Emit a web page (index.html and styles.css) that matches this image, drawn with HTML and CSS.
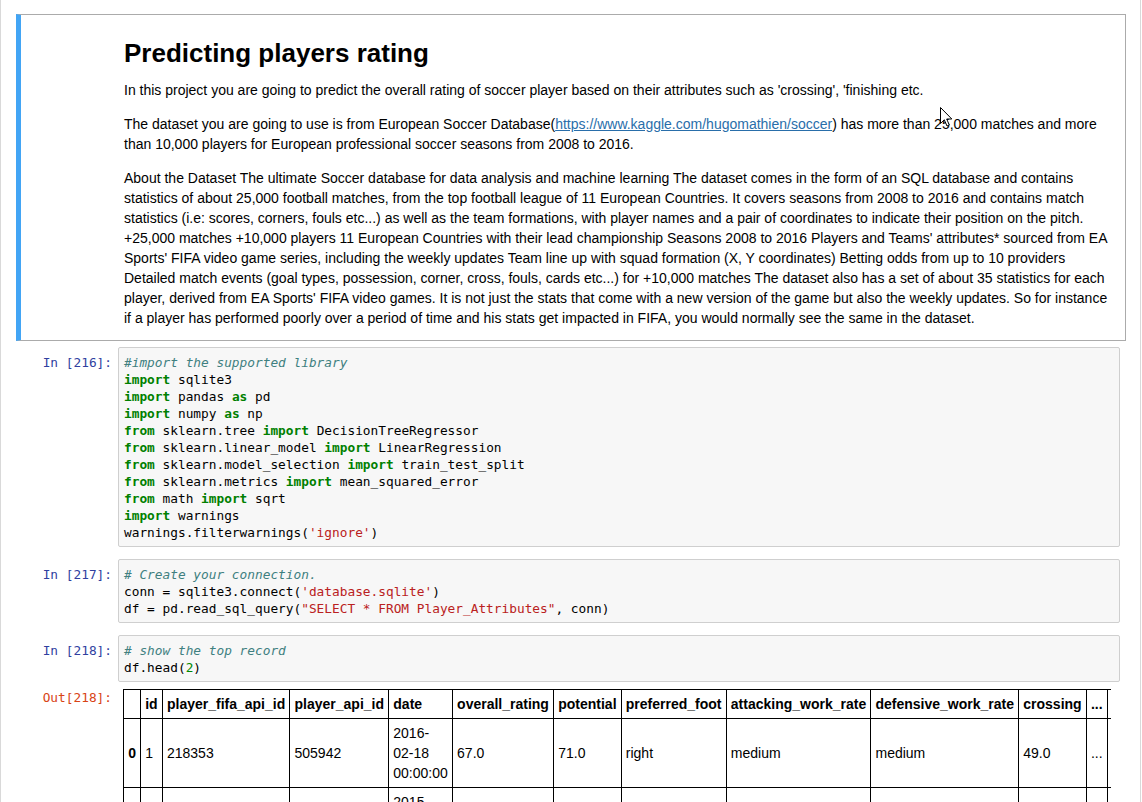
FILE: index.html
```html
<!DOCTYPE html>
<html>
<head>
<meta charset="utf-8">
<title>Predicting players rating</title>
<link rel="stylesheet" href="styles.css">
</head>
<body>
<div class="notebook">
  <div class="cell text-cell selected">
    <div class="prompt"></div>
    <div class="render">
      <h1>Predicting players rating</h1>
      <p>In this project you are going to predict the overall rating of soccer player based on their attributes such as 'crossing', 'finishing etc.</p>
      <p>The dataset you are going to use is from European Soccer Database(<a href="#">https://www.kaggle.com/hugomathien/soccer</a>) has more than 25,000 matches and more than 10,000 players for European professional soccer seasons from 2008 to 2016.</p>
      <p>About the Dataset The ultimate Soccer database for data analysis and machine learning The dataset comes in the form of an SQL database and contains statistics of about 25,000 football matches, from the top football league of 11 European Countries. It covers seasons from 2008 to 2016 and contains match statistics (i.e: scores, corners, fouls etc...) as well as the team formations, with player names and a pair of coordinates to indicate their position on the pitch. +25,000 matches +10,000 players 11 European Countries with their lead championship Seasons 2008 to 2016 Players and Teams' attributes* sourced from EA Sports' FIFA video game series, including the weekly updates Team line up with squad formation (X, Y coordinates) Betting odds from up to 10 providers Detailed match events (goal types, possession, corner, cross, fouls, cards etc...) for +10,000 matches The dataset also has a set of about 35 statistics for each player, derived from EA Sports' FIFA video games. It is not just the stats that come with a new version of the game but also the weekly updates. So for instance if a player has performed poorly over a period of time and his stats get impacted in FIFA, you would normally see the same in the dataset.</p>
    </div>
  </div>

  <div class="cell code-cell">
    <div class="input">
      <div class="prompt in">In&nbsp;[216]:</div>
      <div class="input-area"><span class="cm">#import the supported library</span>
<span class="kw">import</span> sqlite3
<span class="kw">import</span> pandas <span class="kw">as</span> pd
<span class="kw">import</span> numpy <span class="kw">as</span> np
<span class="kw">from</span> sklearn.tree <span class="kw">import</span> DecisionTreeRegressor
<span class="kw">from</span> sklearn.linear_model <span class="kw">import</span> LinearRegression
<span class="kw">from</span> sklearn.model_selection <span class="kw">import</span> train_test_split
<span class="kw">from</span> sklearn.metrics <span class="kw">import</span> mean_squared_error
<span class="kw">from</span> math <span class="kw">import</span> sqrt
<span class="kw">import</span> warnings
warnings.filterwarnings(<span class="str">'ignore'</span>)</div>
    </div>
  </div>

  <div class="cell code-cell">
    <div class="input">
      <div class="prompt in">In&nbsp;[217]:</div>
      <div class="input-area"><span class="cm"># Create your connection.</span>
conn = sqlite3.connect(<span class="str">'database.sqlite'</span>)
df = pd.read_sql_query(<span class="str">"SELECT * FROM Player_Attributes"</span>, conn)</div>
    </div>
  </div>

  <div class="cell code-cell">
    <div class="input">
      <div class="prompt in">In&nbsp;[218]:</div>
      <div class="input-area"><span class="cm"># show the top record</span>
df.head(<span class="num">2</span>)</div>
    </div>
    <div class="output">
      <div class="prompt out">Out[218]:</div>
      <div class="output-sub">
        <div class="df-wrap">
          <table class="dataframe">
            <thead>
              <tr>
                <th></th><th>id</th><th>player_fifa_api_id</th><th>player_api_id</th><th>date</th><th>overall_rating</th><th>potential</th><th>preferred_foot</th><th>attacking_work_rate</th><th>defensive_work_rate</th><th>crossing</th><th>...</th><th>vision</th><th>penalties</th><th>marking</th><th>standing_tackle</th><th>sliding_tackle</th><th>gk_diving</th><th>gk_handling</th><th>gk_kicking</th><th>gk_positioning</th><th>gk_reflexes</th>
              </tr>
            </thead>
            <tbody>
              <tr>
                <th>0</th><td>1</td><td>218353</td><td>505942</td><td>2016-<wbr>02-18 00:00:00</td><td>67.0</td><td>71.0</td><td>right</td><td>medium</td><td>medium</td><td>49.0</td><td>...</td><td>54.0</td><td>48.0</td><td>65.0</td><td>69.0</td><td>69.0</td><td>6.0</td><td>11.0</td><td>10.0</td><td>8.0</td><td>8.0</td>
              </tr>
              <tr>
                <th>1</th><td>2</td><td>218353</td><td>505942</td><td>2015-<wbr>11-19 00:00:00</td><td>67.0</td><td>71.0</td><td>right</td><td>medium</td><td>medium</td><td>49.0</td><td>...</td><td>54.0</td><td>48.0</td><td>65.0</td><td>69.0</td><td>69.0</td><td>6.0</td><td>11.0</td><td>10.0</td><td>8.0</td><td>8.0</td>
              </tr>
            </tbody>
          </table>
        </div>
      </div>
    </div>
  </div>
</div>

<svg class="cursor" width="13" height="21" viewBox="0 0 13 21" aria-hidden="true">
  <path d="M0.5 0.5 L0.5 16.5 L4.3 12.8 L7 19 L9.3 18 L6.7 12 L11.8 12 Z" fill="#fff" stroke="#000" stroke-width="1" stroke-linejoin="miter"/>
</svg>
</body>
</html>
```
FILE: styles.css
```css
html, body {
  margin: 0;
  padding: 0;
  overflow: hidden;
  background: #fff;
}

body {
  font-family: "Liberation Sans", Arial, Helvetica, sans-serif;
  font-size: 14px;
  line-height: 20px;
  color: #000;
}

.notebook {
  width: 1141px;
  min-height: 802px;
  box-sizing: border-box;
  border-left: 1px solid #d9d9d9;
  border-right: 1px solid #d9d9d9;
  padding: 14px 14px 0 15px;
}

.cell {
  display: flex;
  padding: 5px;
  border: 1px solid transparent;
}

.text-cell.selected {
  border-color: #ababab;
  border-left: 5px solid #42a5f5;
  padding-left: 1px;
}

.code-cell {
  flex-direction: column;
}

.prompt {
  flex: 0 0 96px;
  box-sizing: border-box;
  padding: 7px 6px 0 0;
  text-align: right;
  font-family: "DejaVu Sans Mono", "Liberation Mono", monospace;
  font-size: 12.8px;
  line-height: 17px;
  white-space: nowrap;
}

.prompt.in {
  color: #303f9f;
}

.prompt.out {
  color: #d84315;
}

.render {
  flex: 1;
  min-width: 0;
  padding: 7px 7px 7px 6px;
}

.render h1 {
  margin: 13px 0 0 0;
  font-size: 26px;
  line-height: 26px;
  font-weight: bold;
}

.render p {
  margin: 14px 0 0 0;
}

.render a {
  color: #296eaa;
  text-decoration: underline;
}

.input {
  display: flex;
}

.input-area {
  flex: 1;
  min-width: 0;
  background: #f7f7f7;
  border: 1px solid #cfcfcf;
  border-radius: 2px;
  padding: 6px 5px 5px 5px;
  font-family: "DejaVu Sans Mono", "Liberation Mono", monospace;
  font-size: 12.8px;
  line-height: 17px;
  white-space: pre;
  color: #000;
}

.kw {
  color: #008000;
  font-weight: bold;
}

.cm {
  color: #408080;
  font-style: italic;
}

.str {
  color: #ba2121;
}

.num {
  color: #008800;
}

.output {
  display: flex;
}

.output-sub {
  flex: 1;
  min-width: 0;
  padding: 7px 0 0 5px;
}

.df-wrap {
  overflow: hidden;
  margin-right: 9px;
}

.dataframe {
  border-collapse: collapse;
  border: 1px solid #000;
}

.dataframe th,
.dataframe td {
  border: 1px solid #000;
  padding: 4px 4.15px;
  text-align: left;
  vertical-align: middle;
  line-height: 20px;
}

.dataframe th {
  font-weight: bold;
}

.cursor {
  position: absolute;
  left: 940px;
  top: 107px;
}
```
